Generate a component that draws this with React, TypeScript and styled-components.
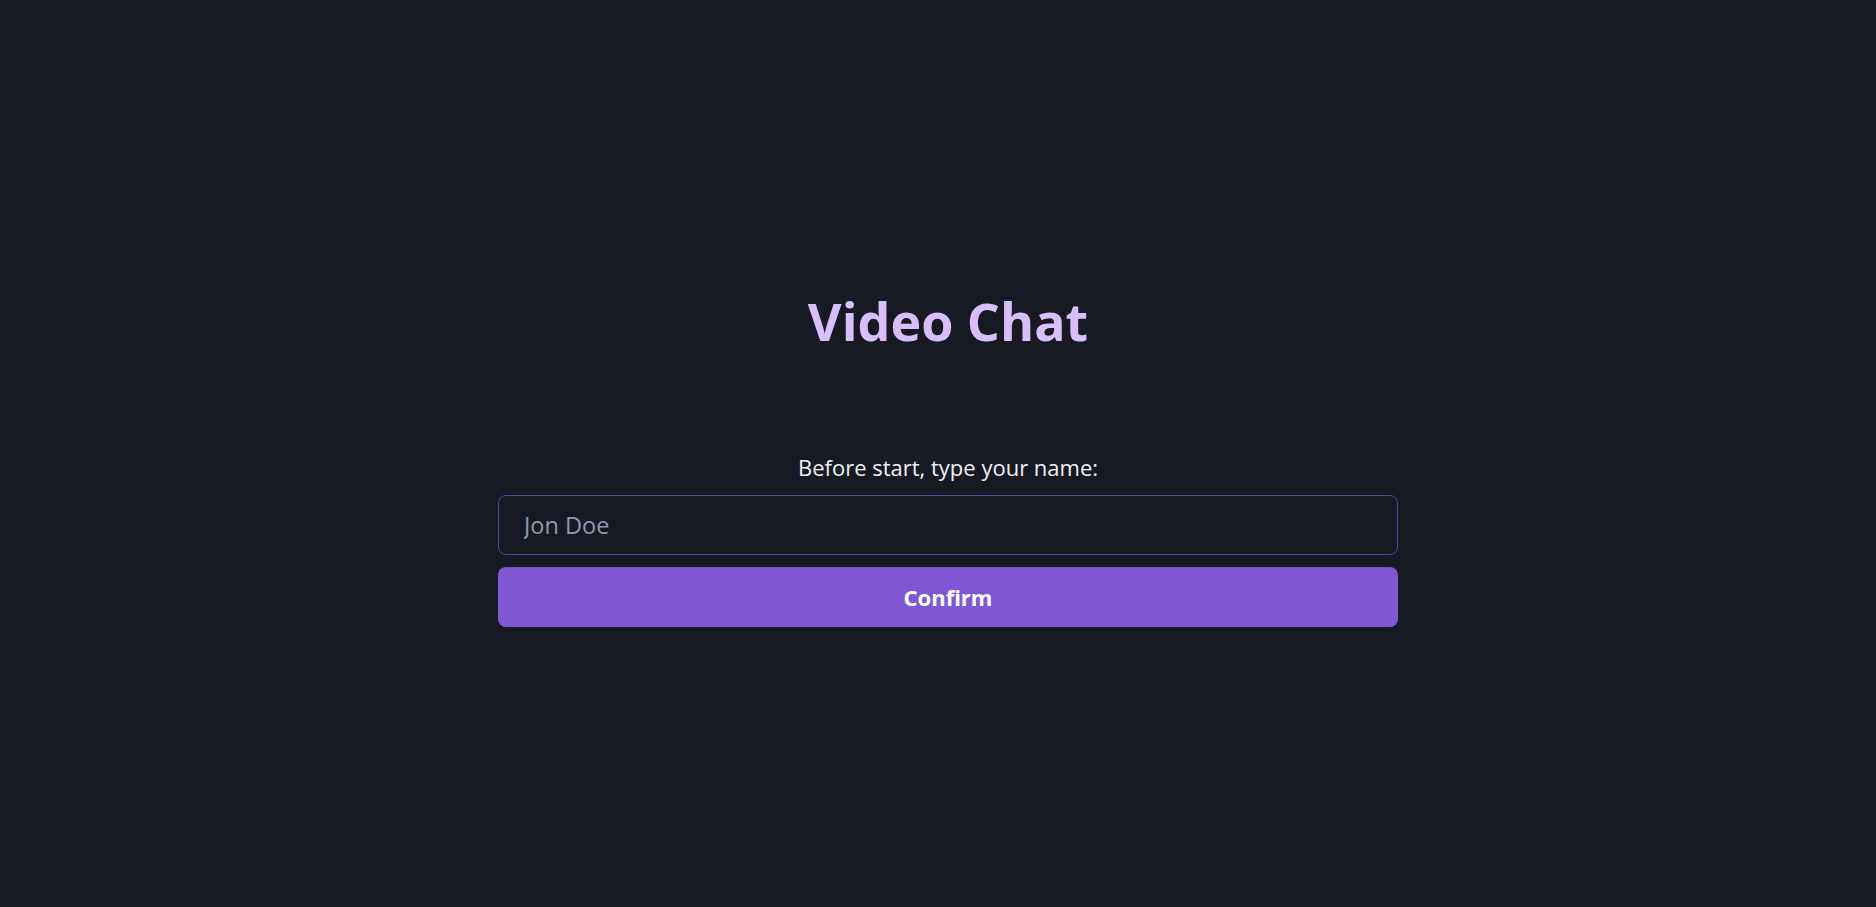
import React from "react";
import styled, { createGlobalStyle } from "styled-components";

const Global = createGlobalStyle`
  html, body { margin: 0; padding: 0; background: #181a23; }
  body { font-family: "Open Sans", "Noto Sans", sans-serif; }
  * { box-sizing: border-box; }
`;

const Page = styled.main`
  min-height: 907px;
  display: flex;
  flex-direction: column;
  align-items: center;
  padding: 286px 0 0 20px;
`;

const Title = styled.h1`
  margin: 0 0 97px;
  font-size: 52px;
  font-weight: 700;
  line-height: 70px;
  color: #d8bffb;
`;

const Form = styled.form`
  width: 900px;
  display: flex;
  flex-direction: column;
  gap: 12px;
`;

const Label = styled.label`
  text-align: center;
  font-size: 22px;
  line-height: 28px;
  color: #eef1f6;
  margin-bottom: 2px;
`;

const Input = styled.input`
  height: 60px;
  padding: 0 25px;
  background: #181a23;
  border: 1px solid #5b3fa8;
  border-radius: 8px;
  color: #e6e8ee;
  font-family: inherit;
  font-size: 23.5px;
  outline: none;
  &::placeholder { color: #8e99ad; }
`;

const Button = styled.button`
  height: 60px;
  border: none;
  border-radius: 8px;
  background: #7e58d3;
  color: #ffffff;
  font-family: inherit;
  font-size: 22px;
  font-weight: 700;
  cursor: pointer;
`;

export default function App() {
  return (
    <>
      <Global />
      <Page>
        <Title>Video Chat</Title>
        <Form onSubmit={(e) => e.preventDefault()}>
          <Label htmlFor="name">Before start, type your name:</Label>
          <Input id="name" placeholder="Jon Doe" />
          <Button type="submit">Confirm</Button>
        </Form>
      </Page>
    </>
  );
}
